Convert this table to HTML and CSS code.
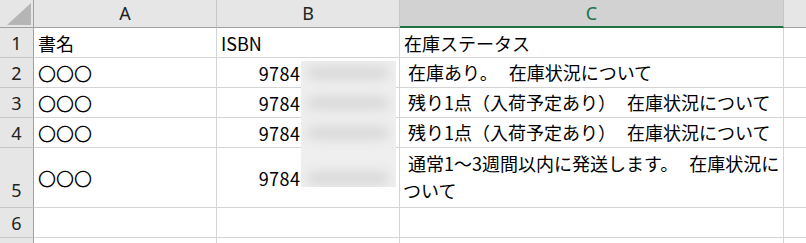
FILE: index.html
```html
<!DOCTYPE html>
<html lang="ja">
<head>
<meta charset="utf-8">
<link rel="stylesheet" href="styles.css">
</head>
<body>
<div class="sheet">
  <div class="grid">
    <div class="corner"><svg class="tri" width="24" height="22" viewBox="0 0 24 22"><polygon points="24,0 24,22 0,22" fill="#b5b5b5"/></svg></div>
    <div class="colhead">A</div>
    <div class="colhead">B</div>
    <div class="colhead sel">C</div>
    <div class="colhead last"></div>

    <div class="rowhead">1</div>
    <div class="cell">書名</div>
    <div class="cell">ISBN</div>
    <div class="cell">在庫ステータス</div>
    <div class="cell last"></div>

    <div class="rowhead">2</div>
    <div class="cell">〇〇〇</div>
    <div class="cell num">9784700000000</div>
    <div class="cell txt"><span class="lead"> </span>在庫あり。<span class="sp"> </span>在庫状況について</div>
    <div class="cell last"></div>

    <div class="rowhead">3</div>
    <div class="cell">〇〇〇</div>
    <div class="cell num">9784700000000</div>
    <div class="cell txt"><span class="lead"> </span>残り1点（入荷予定あり）<span class="sp"> </span>在庫状況について</div>
    <div class="cell last"></div>

    <div class="rowhead">4</div>
    <div class="cell">〇〇〇</div>
    <div class="cell num">9784700000000</div>
    <div class="cell txt"><span class="lead"> </span>残り1点（入荷予定あり）<span class="sp"> </span>在庫状況について</div>
    <div class="cell last"></div>

    <div class="rowhead tall">5</div>
    <div class="cell">〇〇〇</div>
    <div class="cell num">9784700000000</div>
    <div class="cell txt wrap"><span class="lead"> </span>通常1〜3週間以内に発送します。<span class="sp"> </span>在庫状況について</div>
    <div class="cell last"></div>

    <div class="rowhead">6</div>
    <div class="cell"></div>
    <div class="cell"></div>
    <div class="cell"></div>
    <div class="cell last"></div>

    <div class="rowhead"></div>
    <div class="cell"></div>
    <div class="cell"></div>
    <div class="cell"></div>
    <div class="cell last"></div>
  </div>
  <div class="redact">
    <div class="band b1"></div>
    <div class="band b2"></div>
    <div class="band b3"></div>
    <div class="band b4"></div>
  </div>
</div>
</body>
</html>
```
FILE: styles.css
```css
html, body {
  margin: 0;
  padding: 0;
  background: #ffffff;
  overflow: hidden;
}
.sheet {
  position: relative;
  width: 806px;
  height: 243px;
  overflow: hidden;
  font-family: "Noto Sans CJK JP", sans-serif;
  font-size: 18px;
  color: #000000;
}
.grid {
  display: grid;
  grid-template-columns: 34px 183px 183px 384px 22px;
  grid-template-rows: 28px 30px 30px 30px 30px 60px 30px 30px;
}
.grid > div {
  box-sizing: border-box;
  border-right: 1px solid #d4d4d4;
  border-bottom: 1px solid #d4d4d4;
  display: flex;
  align-items: center;
  line-height: 27px;
  white-space: nowrap;
  overflow: hidden;
}
.corner {
  background: #e6e6e6;
  border-right: 1px solid #a0a0a0 !important;
  border-bottom: 1px solid #a0a0a0 !important;
  justify-content: flex-end;
  align-items: flex-end !important;
  padding: 0 2px 2px 0;
}
.tri { display: block; }
.colhead {
  background: #e6e6e6;
  border-right: 1px solid #c6c6c6 !important;
  border-bottom: 1px solid #a0a0a0 !important;
  justify-content: center;
  color: #222222;
  font-family: "Noto Sans", sans-serif;
  font-size: 18px;
  padding-bottom: 1px;
}
.colhead.sel {
  background: #d2d2d2;
  color: #217346;
  border-bottom: 2px solid #217346 !important;
  border-right: 1px solid #c6c6c6 !important;
  padding-bottom: 0;
}
.colhead.last { border-right: none !important; }
.rowhead {
  background: #e6e6e6;
  border-right: 1px solid #a0a0a0 !important;
  border-bottom: 1px solid #c6c6c6 !important;
  justify-content: center;
  color: #222222;
  font-family: "Noto Sans", sans-serif;
  font-size: 18px;
  padding-top: 1px;
}
.rowhead.tall {
  align-items: flex-end !important;
  padding-bottom: 3px;
}
.cell {
  padding: 1px 3px 0 4px;
}
.cell.num {
  justify-content: flex-end;
  padding-right: 4px;
  letter-spacing: 0.5px;
}
.cell.txt {
  display: block !important;
  padding-left: 3px;
  padding-top: 1px;
}
.cell.wrap {
  white-space: normal;
  padding-top: 2px;
}
.lead {
  display: inline-block;
  width: 5px;
}
.sp {
  display: inline-block;
  width: 11px;
}
.cell.last { border-right: none; }
.redact {
  position: absolute;
  left: 301px;
  top: 61px;
  width: 95px;
  height: 126px;
  background: #efefef;
  overflow: hidden;
}
.band {
  position: absolute;
  left: 6px;
  width: 82px;
  height: 12px;
  background: #d6d6d6;
  border-radius: 6px;
  filter: blur(6px);
}
.b1 { top: 6px; }
.b2 { top: 36px; }
.b3 { top: 66px; }
.b4 { top: 111px; }
```
